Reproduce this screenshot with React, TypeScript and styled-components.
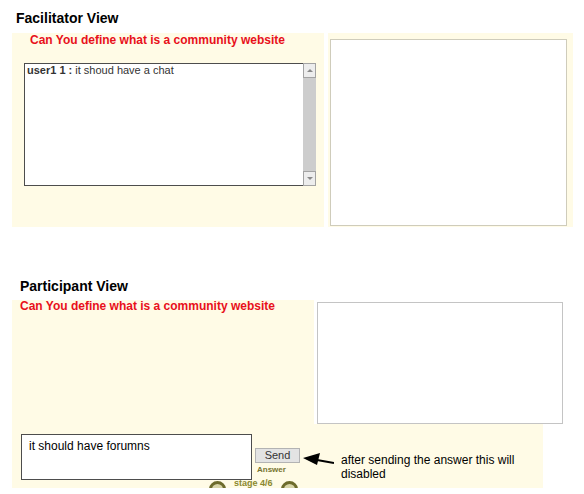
import React from "react";
import styled, { createGlobalStyle } from "styled-components";

const GlobalStyle = createGlobalStyle`
  html, body { margin: 0; padding: 0; background: #ffffff; }
  body { font-family: "Liberation Sans", Arial, Helvetica, sans-serif; color: #000; }
  * { box-sizing: border-box; }
`;

const CREAM = "#fffbe6";
const RED = "#e8101a";
const OLIVE = "#76742f";

const Page = styled.div`
  display: flex;
  flex-direction: column;
  width: 584px;
`;

const ViewTitle = styled.h2<{ $indent: number; $top: number }>`
  margin: ${(p) => p.$top}px 0 0 ${(p) => p.$indent}px;
  font-size: 14px;
  line-height: 17px;
  font-weight: bold;
`;

const Question = styled.div<{ $indent: number; $top: number }>`
  margin: ${(p) => p.$top}px 0 0 ${(p) => p.$indent}px;
  color: ${RED};
  font-size: 12px;
  line-height: 15px;
  font-weight: bold;
  white-space: nowrap;
`;

/* ---------- Facilitator ---------- */
const FacRow = styled.div`
  display: flex;
  margin: 6px 0 0 12px;
`;

const FacLeftPanel = styled.div`
  width: 312px;
  height: 194px;
  background: ${CREAM};
  padding-left: 12px;
  display: flex;
  flex-direction: column;
`;

const ChatBox = styled.div`
  display: flex;
  width: 292px;
  height: 123px;
  margin-top: 15px;
`;

const ChatArea = styled.div`
  flex: 1;
  background: #fff;
  border: 1px solid #4d4d4d;
  border-right: none;
  padding: 0 2px;
  font-size: 11px;
  line-height: 13px;
  color: #333;
`;

const Scrollbar = styled.div`
  width: 13px;
  background: #cdcdcd;
  display: flex;
  flex-direction: column;
  justify-content: space-between;
`;

const ScrollButton = styled.div`
  width: 13px;
  height: 15px;
  background: #ededed;
  border: 1px solid #a3a3a3;
  display: flex;
  align-items: center;
  justify-content: center;
`;

const Tri = styled.span<{ $up: boolean }>`
  width: 0;
  height: 0;
  border-left: 3px solid transparent;
  border-right: 3px solid transparent;
  ${(p) => (p.$up ? "border-bottom: 3px solid #8a8a8a;" : "border-top: 3px solid #8a8a8a;")}
`;

const FacRightPanel = styled.div`
  width: 245px;
  height: 194px;
  margin-left: 4px;
  background: ${CREAM};
  padding: 6px 0 0 2px;
`;

const FacBoard = styled.div`
  width: 237px;
  height: 187px;
  background: #fff;
  border: 1px solid #cfccbb;
`;

/* ---------- Participant ---------- */
const PartPanel = styled.div`
  display: flex;
  flex-direction: column;
  margin: 5px 0 0 12px;
`;

const PartTop = styled.div`
  display: flex;
`;

const PartLeftPanel = styled.div`
  width: 302px;
  height: 124px;
  background: ${CREAM};
`;

const PartBoard = styled.div`
  width: 246px;
  height: 122px;
  margin: 2px 0 0 3px;
  background: #fff;
  border: 1px solid #c4c4c4;
`;

const PartBottom = styled.div`
  width: 531px;
  height: 64px;
  background: ${CREAM};
  padding: 10px 0 0 9px;
  display: flex;
  flex-direction: column;
`;

const AnswerRow = styled.div`
  display: flex;
  align-items: flex-start;
`;

const AnswerInput = styled.div`
  width: 231px;
  height: 46px;
  background: #fff;
  border: 1px solid #4d4d4d;
  padding: 4px 7px;
  font-size: 12px;
  line-height: 14px;
`;

const SendCol = styled.div`
  display: flex;
  flex-direction: column;
  margin: 14px 0 0 3px;
`;

const SendButton = styled.button`
  width: 45px;
  height: 15px;
  padding: 0;
  background: #e3e3e3;
  border: 1px solid #b3b3b3;
  font-family: "Liberation Sans", Arial, sans-serif;
  font-size: 11px;
  line-height: 13px;
  color: #333;
`;

const AnswerLabel = styled.div`
  margin-top: 2px;
  padding-left: 2px;
  font-size: 8px;
  line-height: 9px;
  font-weight: bold;
  color: ${OLIVE};
`;

const ArrowIcon = styled.svg`
  margin: 18px 0 0 3px;
  flex: none;
`;

const Note = styled.div`
  width: 200px;
  margin: 19px 0 0 7px;
  font-size: 12px;
  line-height: 14px;
`;

const StageRow = styled.div`
  display: flex;
  align-items: flex-start;
  gap: 8px;
  height: 11px;
  margin: -3px 0 0 188px;
  overflow: hidden;
`;

const StageCircle = styled.span`
  width: 17px;
  height: 17px;
  margin-top: 3px;
  border-radius: 50%;
  border: 3px solid #6d6b2c;
  background: #d8d5a8;
  flex: none;
`;

const StageText = styled.span`
  font-size: 9px;
  line-height: 10px;
  color: #8a882f;
  font-weight: bold;
`;

export default function App() {
  return (
    <>
      <GlobalStyle />
      <Page>
        <ViewTitle $indent={16} $top={10}>Facilitator View</ViewTitle>
        <FacRow>
          <FacLeftPanel>
            <Question $indent={6} $top={0}>Can You define what is a community website</Question>
            <ChatBox>
              <ChatArea>
                <b>user1 1 :</b> it shoud have a chat
              </ChatArea>
              <Scrollbar>
                <ScrollButton>
                  <Tri $up={true} />
                </ScrollButton>
                <ScrollButton>
                  <Tri $up={false} />
                </ScrollButton>
              </Scrollbar>
            </ChatBox>
          </FacLeftPanel>
          <FacRightPanel>
            <FacBoard />
          </FacRightPanel>
        </FacRow>

        <ViewTitle $indent={20} $top={51}>Participant View</ViewTitle>
        <PartPanel>
          <PartTop>
            <PartLeftPanel>
              <Question $indent={8} $top={-1}>Can You define what is a community website</Question>
            </PartLeftPanel>
            <PartBoard />
          </PartTop>
          <PartBottom>
            <AnswerRow>
              <AnswerInput>it should have forumns</AnswerInput>
              <SendCol>
                <SendButton>Send</SendButton>
                <AnswerLabel>Answer</AnswerLabel>
              </SendCol>
              <ArrowIcon width="31" height="14" viewBox="0 0 31 14">
                <polygon points="0,6 17,1 14,13" fill="#000" />
                <line x1="14" y1="8" x2="31" y2="11" stroke="#000" strokeWidth="2.2" />
              </ArrowIcon>
              <Note>after sending the answer this will disabled</Note>
            </AnswerRow>
            <StageRow>
              <StageCircle />
              <StageText>stage 4/6</StageText>
              <StageCircle />
            </StageRow>
          </PartBottom>
        </PartPanel>
      </Page>
    </>
  );
}
